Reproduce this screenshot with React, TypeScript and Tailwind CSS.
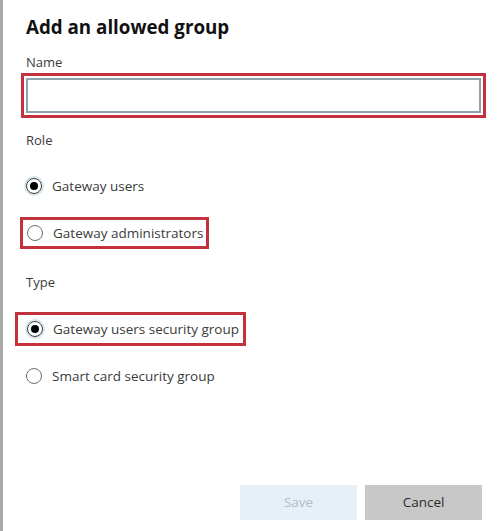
import React from 'react';

const font = { fontFamily: '"Open Sans", "Liberation Sans", sans-serif' };

const Radio: React.FC<{ checked?: boolean; label: string }> = ({ checked, label }) => (
  <div className="flex items-center gap-[10px] h-[24px]">
    <span
      className={
        checked
          ? 'w-[16px] h-[16px] rounded-full border-[1.5px] border-[#3a3a3a] flex items-center justify-center shadow-[0_0_0_2px_#d6e6ee]'
          : 'w-[16px] h-[16px] rounded-full border-[1.5px] border-[#6e6e6e]'
      }
    >
      {checked && <span className="w-[8px] h-[8px] rounded-full bg-black" />}
    </span>
    <span className="text-[13.5px] text-[#3b3b3b]">{label}</span>
  </div>
);

export default function App() {
  return (
    <div className="w-[504px] h-[531px] bg-white border-l-[3px] border-[#a9a9a9] flex flex-col pl-[23px] pr-[18px] pt-[14px] pb-[11px]" style={font}>
      <h2 className="text-[18.75px] font-bold leading-[26px] text-[#111]">Add an allowed group</h2>

      <label className="mt-[12px] text-[13px] leading-[20px] text-[#3b3b3b]">Name</label>
      <div className="mt-[1px] -ml-[5px] w-[465px] border-[3px] border-[#c3313c] p-[2px]">
        <input className="block w-full h-[35px] border-2 border-[#8fa2ab] outline-none" />
      </div>

      <div className="mt-[12px] text-[13px] leading-[20px] text-[#3b3b3b]">Role</div>
      <div className="mt-[24px]">
        <Radio checked label="Gateway users" />
      </div>
      <div className="mt-[19px] -ml-[6px] self-start border-[3px] border-[#c3313c] pl-[4px] pr-[3px] py-[1px]">
        <Radio label="Gateway administrators" />
      </div>

      <div className="mt-[23px] text-[13px] leading-[20px] text-[#3b3b3b]">Type</div>
      <div className="mt-[20px] -ml-[11px] self-start border-[3px] border-[#c3313c] pl-[9px] pr-[4px] py-[2px]">
        <Radio checked label="Gateway users security group" />
      </div>
      <div className="mt-[18px]">
        <Radio label="Smart card security group" />
      </div>

      <div className="mt-auto flex justify-end gap-[8px] pr-[4px]">
        <button className="w-[117px] h-[35px] bg-[#e6f0f7] text-[#b4bcc3] text-[13.5px]">Save</button>
        <button className="w-[117px] h-[35px] bg-[#c8c8c8] text-[#2b2b2b] text-[13.5px]">Cancel</button>
      </div>
    </div>
  );
}
